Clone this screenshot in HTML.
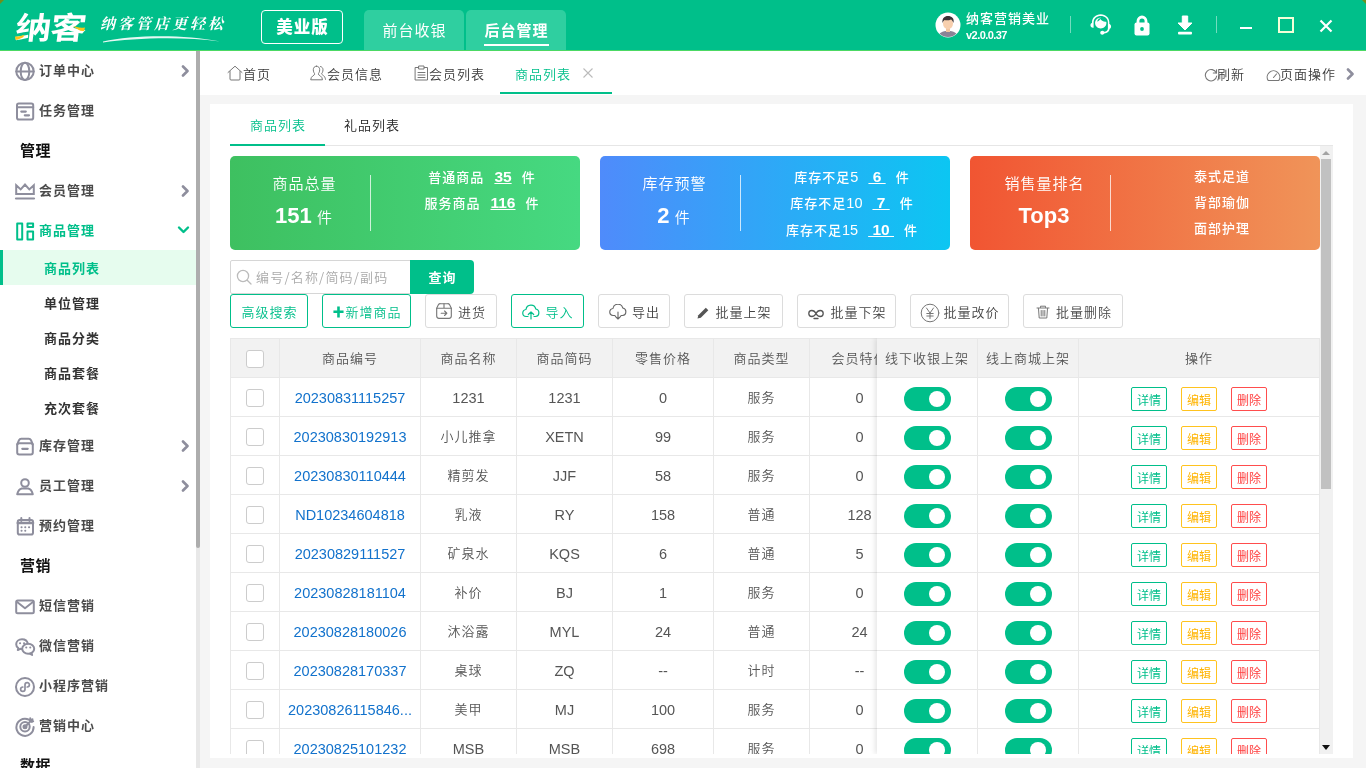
<!DOCTYPE html>
<html lang="zh-CN">
<head>
<meta charset="utf-8">
<title>商品列表</title>
<style>
*{box-sizing:border-box;margin:0;padding:0}
html,body{width:1366px;height:768px;overflow:hidden;background:#f5f5f5}
body{font-family:"Liberation Sans","Noto Sans CJK SC",sans-serif;font-size:13px;letter-spacing:1px;font-weight:350;color:#333;position:relative}
#wrap{position:absolute;left:0;top:0;width:1366px;height:768px;will-change:transform}
.abs{position:absolute}
svg{display:block}
/* header */
#hd{position:absolute;left:0;top:0;width:1366px;height:51px;background:#00bf8a;border-bottom:1px solid #4cd964}
#logo{position:absolute;left:16px;top:3px;font-size:36px;line-height:44px;font-weight:700;color:#fff;letter-spacing:-1px;font-family:"Noto Sans CJK SC",sans-serif;transform:skewX(-7deg) scaleY(.855);transform-origin:0 50%}
#slogan{position:absolute;left:100px;top:12px;font-size:15px;line-height:22px;letter-spacing:3px;font-weight:700;color:#fff;font-family:"Noto Serif CJK SC",serif;font-style:italic;white-space:nowrap}
#ver{position:absolute;left:261px;top:10px;width:82px;height:34px;border:1px solid #fff;border-radius:4px;color:#fff;font-weight:900;font-size:16.500px;line-height:31px;text-align:center;padding-left:1px;font-family:"Noto Sans CJK SC",sans-serif}
.htab{position:absolute;top:10px;height:40px;width:100px;background:#2fcfa0;border-radius:5px 5px 0 0;color:#fff;font-size:15px;font-weight:400;line-height:42px;text-align:center;padding-left:1px}
.htab u{text-decoration:none;border-bottom:2px solid #fff;padding-bottom:5px;font-weight:bold}
#un{position:absolute;left:966px;top:9px;color:#fff;font-size:13px;line-height:20px;font-weight:500;white-space:nowrap}
#uv{position:absolute;left:966px;top:28px;color:#fff;font-size:11px;line-height:14px;white-space:nowrap;letter-spacing:-.55px;font-weight:bold}
.hsep{position:absolute;top:16px;width:1px;height:17px;background:rgba(255,255,255,.45)}
/* sidebar */
#sb{position:absolute;left:0;top:51px;width:196px;height:717px;background:#fff;overflow:hidden}
#sbtrk{position:absolute;left:196px;top:51px;width:4px;height:717px;background:#e8e8e8}
#sbbar{position:absolute;left:196px;top:51px;width:4px;height:497px;background:#adadad;border-radius:0 0 2px 2px}
.mi{position:absolute;left:0;width:196px;height:40px;line-height:40px;font-weight:bold;color:#4a4a4a;font-size:13px}
.mi span{position:absolute;left:39px;top:1px}
.mi svg.ic{position:absolute;left:14px;top:10px}
.mi svg.ch{position:absolute;left:180px;top:14px}
.mh{position:absolute;left:20px;font-size:15px;letter-spacing:.5px;font-weight:bold;color:#111;line-height:42px}
.si{position:absolute;left:0;width:196px;height:35px;line-height:37px;font-weight:bold;color:#333;font-size:13px;padding-left:44px}
.si.on{background:#e6fcee;color:#00bf8a;border-left:3px solid #00bf8a;padding-left:41px}
/* tabbar */
#tb{position:absolute;left:200px;top:51px;width:1166px;height:44px;background:#fff}
.tt{position:absolute;top:0;height:44px;line-height:47px;font-size:13px;color:#3a3a3a;white-space:nowrap}
/* panel */
#pn{position:absolute;left:210px;top:104px;width:1143px;height:654px;background:#fff}
.itab{position:absolute;top:0;height:42px;line-height:44px;font-size:13px;color:#222}
.card{position:absolute;top:52px;width:350px;height:94px;border-radius:5px;color:#fff}
.card .t{position:absolute;left:0;width:148px;text-align:center;top:16px;font-size:15px;padding-left:1px;line-height:24px}
.card .n{position:absolute;left:0;width:148px;text-align:center;top:46px;font-size:15px;line-height:28px}
.card .n b{font-size:22px;letter-spacing:0}
.card .dv{position:absolute;left:140px;top:19px;width:1px;height:56px;background:rgba(255,255,255,.75)}
.card .r{position:absolute;left:152px;width:200px;text-align:center;font-size:13px;line-height:22px;white-space:nowrap;font-weight:500}
.card .r i{font-style:normal;font-size:14.500px;letter-spacing:0}
.card .r b{font-size:15.500px;letter-spacing:0;text-decoration:underline;white-space:pre;margin:0 10px 0 10px}
.btn{position:absolute;top:190px;height:34px;border:1px solid #dcdcdc;border-radius:3px;font-size:13px;line-height:36px;padding-left:1px;color:#444;white-space:nowrap;text-align:center;background:#fff}
.btn.g{border-color:#00bf8a;color:#00bf8a}
.btn svg{display:inline-block;vertical-align:-3px;margin-right:5px}
/* table */
#tbl{position:absolute;left:20px;top:234px;width:1090px;height:416px;overflow:hidden}
.tr{position:absolute;left:0;width:1090px;height:39px;border-bottom:1px solid #e8e8e8;background:#fff}
.tr.h{background:#f2f2f2;color:#555;height:40px;border-top:1px solid #e8e8e8}
.tr.h .td{height:38px}
.td{position:absolute;top:0;height:38px;line-height:40px;text-align:center;border-right:1px solid #e8e8e8;color:#555;font-size:13px;white-space:nowrap;overflow:hidden}
.td.l{font-size:14.500px;letter-spacing:0}
.td.id{color:#1272cc}
.cb{position:absolute;left:16px;top:11px;width:18px;height:18px;border:1px solid #ccc;border-radius:3px;background:#fff}
.sw{position:absolute;top:9px;width:47px;height:24px;border-radius:12px;background:#00bf8a}
.sw i{position:absolute;right:6px;top:4px;width:16px;height:16px;border-radius:8px;background:#fff}
.ob{position:absolute;top:9px;width:36px;height:24px;border:1px solid;border-radius:2px;font-size:12px;letter-spacing:0;font-weight:400;line-height:26px;text-align:center;background:#fff;overflow:hidden}
.ob.d{color:#00bf8a;border-color:#00bf8a}
.ob.e{color:#ffb400;border-color:#ffc31f}
.ob.x{color:#ff4040;border-color:#ff4d4d}
#fx{position:absolute;left:647px;top:0;width:443px;height:416px;box-shadow:-2px 0 5px rgba(0,0,0,.10);pointer-events:none}
</style>
</head>
<body><div id="wrap">
<div id="hd">
<div id="logo">纳客</div><svg class="abs" style="left:14px;top:24px" width="75" height="18" viewBox="0 0 75 18" fill="#fcc419"><path d="M1 12.500c3 .5 6-.8 9.500-1.800l-1.300 2.500C6 14.500 3.500 16 1.500 15.800z"/><path d="M59 2c3 .5 6 2.500 12 1.500l-1 3.500c-4 .5-7-2-11-5z"/></svg>
<div id="slogan">纳客管店更轻松</div><svg class="abs" style="left:103px;top:34px" width="120" height="10" viewBox="0 0 120 10" fill="#fff" opacity=".9"><path d="M0 7.500C30 1 80 0 117 7.500 80 2.200 30 4 0 8.500z"/></svg>
<div id="ver">美业版</div>
<div class="htab" style="left:364px">前台收银</div>
<div class="htab" style="left:466px"><u>后台管理</u></div>
<svg class="abs" style="left:935px;top:12px" width="26" height="26" viewBox="0 0 26 26"><defs><clipPath id="avc"><circle cx="13" cy="13" r="12"/></clipPath></defs><circle cx="13" cy="13" r="12.500" fill="#fff"/><g clip-path="url(#avc)"><path d="M3 26c0-5 4-7 10-7s10 2 10 7z" fill="#8a8396"/><rect x="11" y="15" width="4" height="5" fill="#f2c5a0"/><ellipse cx="13" cy="11.500" rx="5" ry="5.800" fill="#f7cfae"/><path d="M7.500 11c-.5-5 2-7 5.500-7s6.500 2 5.500 7c-.8-2-1.500-3-2.500-3.500-2 1-5 1-6.500.5-1 .8-1.500 1.800-2 3z" fill="#3a3336"/></g></svg>
<div id="un">纳客营销美业</div>
<div id="uv">v2.0.0.37</div>
<div class="hsep" style="left:1070px"></div>
<svg class="abs" style="left:1090px;top:13px" width="21.500" height="22.500" viewBox="0 0 25 26" fill="#fff" stroke="none"><path d="M12.500 1.500C6.500 1.500 2.300 5.800 2.300 11v.6C1.200 12 .5 13 .5 14.200c0 1.600 1.300 2.900 2.900 2.900h.8V10.800c0-4.200 3.500-7.300 8.300-7.300s8.300 3.100 8.300 7.300v7c0 2.200-1.700 3.600-4.300 3.900-.4-.7-1.200-1.200-2.100-1.200-1.400 0-2.500 1-2.500 2.300s1.100 2.300 2.500 2.300c1 0 1.800-.5 2.200-1.300 3.600-.4 6.100-2.400 6.300-5.600 1-.5 1.600-1.500 1.600-2.700 0-1.300-.8-2.400-2-2.800V11c0-5.200-4.200-9.500-10-9.500z"/><path d="M12.500 5.500c-3.800 0-6.600 2.600-6.600 6.100 0 3.600 2.800 6.300 6.600 6.300s6.600-2.700 6.600-6.300c0-.6-.1-1.100-.2-1.600-1.500.3-3.200-.1-4.700-1-.9-.6-1.600-1.400-2-2.200-.8 1.300-2.200 2.500-3.900 3 .5-2.400 2.300-4 4.700-4.200z" /></svg><svg class="abs" style="left:1132px;top:13px" width="20" height="24" viewBox="0 0 20 24" fill="none"><path d="M6 10V8a4 4 0 0 1 8 0v2" stroke="#fff" stroke-width="2.800"/><rect x="2.500" y="9.500" width="15" height="13" rx="2" fill="#fff"/><circle cx="10" cy="16" r="1.900" fill="#00bf8a"/></svg><svg class="abs" style="left:1175px;top:14px" width="20" height="22" viewBox="0 0 20 22" fill="#fff"><path d="M7.300 2h5.400v7h4.300L10 16 3 9h4.300z" stroke="#fff" stroke-width="1" stroke-linejoin="round"/><rect x="3" y="17.800" width="14" height="2.600" rx="1"/></svg>
<div class="hsep" style="left:1216px"></div>
<div class="abs" style="left:1240px;top:27px;width:12px;height:2px;background:#fff"></div><div class="abs" style="left:1278px;top:17px;width:16px;height:16px;border:2px solid #f4ffd8"></div><svg class="abs" style="left:1319px;top:19px" width="14" height="14" viewBox="0 0 14 14" stroke="#fff" stroke-width="2.200" stroke-linecap="butt"><path d="M1.500 1.500l11 11M12.500 1.500l-11 11"/></svg>
<div class="abs" style="left:0;top:0;width:0;height:0;border-top:4px solid #6f8f1c;border-right:4px solid transparent"></div><div class="abs" style="left:1362px;top:0;width:0;height:0;border-top:4px solid #6f8f1c;border-left:4px solid transparent"></div>
</div>
<div id="sb">
<div class="mi" style="top:-1px"><svg class="ic" width="22" height="22" viewBox="0 0 22 22" fill="none" stroke="#8e8e9d" stroke-width="2" stroke-linecap="round" stroke-linejoin="round"><circle cx="11" cy="11.400" r="8.700"/><ellipse cx="11" cy="11.400" rx="4.300" ry="8.700"/><path d="M2.300 11.400h17.400"/></svg><span>订单中心</span><svg class="ch" style="top:15px" width="10" height="12" viewBox="0 0 10 12" fill="none" stroke="#8e8e9d" stroke-width="2.6" stroke-linecap="round" stroke-linejoin="round"><path d="M3 1.500l4.500 4.500L3 10.500"/></svg></div>
<div class="mi" style="top:39px"><svg class="ic" width="22" height="22" viewBox="0 0 22 22" fill="none" stroke="#8e8e9d" stroke-width="2" stroke-linecap="round" stroke-linejoin="round"><rect x="3" y="3.400" width="16.200" height="16.200" rx="1.800"/><path d="M3 7.300h16.200"/><path d="M7.300 11.600h4.500M10.800 15.300h4.200" stroke-width="2.200"/></svg><span>任务管理</span></div>
<div class="mh" style="top:79px">管理</div>
<div class="mi" style="top:119px"><svg class="ic" width="22" height="22" viewBox="0 0 22 22" fill="none" stroke="#8e8e9d" stroke-width="2" stroke-linecap="round" stroke-linejoin="round"><path d="M2.200 5.200l4.500 4.200L11 4.600l4.300 4.800 4.500-4.200V14H2.200z" stroke-linejoin="miter"/><path d="M2 18.500h18" stroke-width="2.200"/></svg><span>会员管理</span><svg class="ch" style="top:15px" width="10" height="12" viewBox="0 0 10 12" fill="none" stroke="#8e8e9d" stroke-width="2.6" stroke-linecap="round" stroke-linejoin="round"><path d="M3 1.500l4.500 4.500L3 10.500"/></svg></div>
<div class="mi" style="top:159px;color:#00bf8a"><svg class="ic" width="22" height="22" viewBox="0 0 22 22" fill="none" stroke="#00bf8a" stroke-width="2" stroke-linecap="round" stroke-linejoin="round"><rect x="3.200" y="3.400" width="5" height="16.200"/><rect x="13.500" y="3.400" width="5.600" height="3.600"/><rect x="13.500" y="11.400" width="5.600" height="8.200"/></svg><span>商品管理</span><svg class="ch" style="left:177px;top:15px" width="13" height="10" viewBox="0 0 13 10" fill="none" stroke="#00bf8a" stroke-width="2.4" stroke-linecap="round" stroke-linejoin="round"><path d="M2 2.500l4.500 4.500L11 2.500"/></svg></div>
<div class="si on" style="top:199px">商品列表</div>
<div class="si" style="top:234px">单位管理</div>
<div class="si" style="top:269px">商品分类</div>
<div class="si" style="top:304px">商品套餐</div>
<div class="si" style="top:339px">充次套餐</div>
<div class="mi" style="top:374px"><svg class="ic" width="22" height="22" viewBox="0 0 22 22" fill="none" stroke="#8e8e9d" stroke-width="2" stroke-linecap="round" stroke-linejoin="round"><path d="M3.200 9.500l1.800-4.300A2.500 2.500 0 0 1 7.300 3.800h7.400a2.500 2.500 0 0 1 2.300 1.400l1.800 4.300"/><rect x="3.200" y="8.200" width="15.600" height="11.400" rx="2"/><path d="M8.300 13.800h5.400" stroke-width="2.200"/></svg><span>库存管理</span><svg class="ch" style="top:15px" width="10" height="12" viewBox="0 0 10 12" fill="none" stroke="#8e8e9d" stroke-width="2.6" stroke-linecap="round" stroke-linejoin="round"><path d="M3 1.500l4.500 4.500L3 10.500"/></svg></div>
<div class="mi" style="top:414px"><svg class="ic" width="22" height="22" viewBox="0 0 22 22" fill="none" stroke="#8e8e9d" stroke-width="2" stroke-linecap="round" stroke-linejoin="round"><circle cx="11" cy="8" r="3.800"/><path d="M3.200 19.300c.8-3.300 2.400-5.300 4.600-5.800h6.400c2.200.5 3.800 2.500 4.600 5.800z"/></svg><span>员工管理</span><svg class="ch" style="top:15px" width="10" height="12" viewBox="0 0 10 12" fill="none" stroke="#8e8e9d" stroke-width="2.6" stroke-linecap="round" stroke-linejoin="round"><path d="M3 1.500l4.500 4.500L3 10.500"/></svg></div>
<div class="mi" style="top:454px"><svg class="ic" width="22" height="22" viewBox="0 0 22 22" fill="none" stroke="#8e8e9d" stroke-width="2" stroke-linecap="round" stroke-linejoin="round"><rect x="3.800" y="5" width="15.200" height="14.500" rx="1.800"/><path d="M3.800 8h15.200" stroke-width="2.600"/><path d="M7.300 3v3M15.500 3v3"/><path d="M7.500 12.200h.1M11.200 12.200h.1M15 12.200h.1M7.500 15.800h.1M11.200 15.800h.1" stroke-width="2"/></svg><span>预约管理</span></div>
<div class="mh" style="top:494px">营销</div>
<div class="mi" style="top:534px"><svg class="ic" width="22" height="22" viewBox="0 0 22 22" fill="none" stroke="#8e8e9d" stroke-width="2" stroke-linecap="round" stroke-linejoin="round"><rect x="2.200" y="5.600" width="17.600" height="12.600" rx="1.500"/><path d="M2.800 6.800l8.200 6.400 8.200-6.400"/></svg><span>短信营销</span></div>
<div class="mi" style="top:574px"><svg class="ic" width="22" height="22" viewBox="0 0 22 22" fill="none" stroke="#8e8e9d" stroke-width="2" stroke-linecap="round" stroke-linejoin="round"><path d="M13.800 8.600C13.300 6 11 4.200 8 4.200c-3.300 0-5.800 2.200-5.800 5 0 1.600.8 3 2.100 3.900L3.800 15l2.500-1.200c.5.100 1 .2 1.600.2"/><ellipse cx="14.200" cy="13.700" rx="6" ry="5"/><path d="M17.500 18l.6 2-2.300-1.300"/><path d="M6 8.200h.1M10 8.200h.1M12.200 12.500h.1M16.200 12.500h.1" stroke-width="2"/></svg><span>微信营销</span></div>
<div class="mi" style="top:614px"><svg class="ic" width="22" height="22" viewBox="0 0 22 22" fill="none" stroke="#8e8e9d" stroke-width="2" stroke-linecap="round" stroke-linejoin="round"><circle cx="11" cy="12" r="9"/><path d="M11 14.200V9.800a2.200 2.200 0 1 1 2.200 2.200M11 9.800v4.400a2.200 2.200 0 1 1-2.200-2.200" stroke-width="1.700"/></svg><span>小程序营销</span></div>
<div class="mi" style="top:654px"><svg class="ic" width="22" height="22" viewBox="0 0 22 22" fill="none" stroke="#8e8e9d" stroke-width="2" stroke-linecap="round" stroke-linejoin="round"><path d="M17.800 7A8.600 8.600 0 1 0 19.600 12"/><circle cx="11" cy="11.800" r="4.700"/><circle cx="11" cy="11.800" r="1.500" fill="#8e8e9d"/><path d="M11 11.800l7.500-7.500M16.200 3.300l.5 2.500 2.500.5"/></svg><span>营销中心</span></div>
<div class="mh" style="top:694px">数据</div>
</div>
<div id="sbtrk"></div><div id="sbbar"></div>
<div id="tb">
<div class="abs" style="left:27px;top:14px"><svg width="16" height="16" viewBox="0 0 16 16" fill="none" stroke="#777" stroke-width="1" stroke-linecap="round" stroke-linejoin="round"><path d="M1 7.500L8 1.200l7 6.300M3 6.500V14a1 1 0 0 0 1 1h8a1 1 0 0 0 1-1V6.500"/></svg></div><div class="tt" style="left:43px">首页</div>
<div class="abs" style="left:110px;top:14px"><svg width="17" height="16" viewBox="0 0 17 16" fill="none" stroke="#777" stroke-width="1" stroke-linecap="round" stroke-linejoin="round"><path d="M6.500 1.200c2 0 3.200 1.500 3.200 3.500S8.700 8.500 8 9c0 1 4.500 2 4.500 5.800H.7C.7 11 5 10 5 9c-.7-.5-1.700-2.300-1.700-4.300s1.200-3.500 3.200-3.500z"/><path d="M10.500 1.500c1.500.3 2.500 1.600 2.500 3.300 0 2-1 3.500-1.500 4 .2 1 3.700 1.800 4 5.500"/></svg></div><div class="tt" style="left:127px">会员信息</div>
<div class="abs" style="left:214px;top:14px"><svg width="15" height="16" viewBox="0 0 15 16" fill="none" stroke="#777" stroke-width="1" stroke-linecap="round" stroke-linejoin="round"><rect x="1.500" y="2.500" width="12" height="12.500"/><rect x="5" y="1" width="5" height="3" fill="#fff"/><path d="M4 7.500h7M4 10h7M4 12.500h7"/></svg></div><div class="tt" style="left:229px">会员列表</div>
<div class="tt" style="left:315px;color:#00bf8a">商品列表</div>
<div class="abs" style="left:383px;top:17px"><svg width="10" height="10" viewBox="0 0 10 10" stroke="#bbb" stroke-width="1.100"><path d="M.5.500l9 9M9.500.500l-9 9"/></svg></div>
<div class="abs" style="left:300px;top:41px;width:112px;height:2px;background:#00bf8a"></div>
<div class="abs" style="left:1004px;top:17px"><svg width="14" height="14" viewBox="0 0 14 14" fill="none" stroke="#777" stroke-width="1.1" stroke-linecap="round" stroke-linejoin="round"><path d="M12.300 5A5.700 5.700 0 1 0 12.700 8"/><path d="M12.500 1.800V5H9.300"/></svg></div><div class="tt" style="left:1017px">刷新</div>
<div class="abs" style="left:1066px;top:17px"><svg width="15" height="14" viewBox="0 0 15 14" fill="none" stroke="#777" stroke-width="1.1" stroke-linecap="round" stroke-linejoin="round"><path d="M2.200 12.500A6.300 6.300 0 1 1 12.800 12.500z"/><path d="M7.500 9.500l3-3.500"/></svg></div><div class="tt" style="left:1080px">页面操作</div>
<div class="abs" style="left:1145px;top:17px"><svg width="10" height="12" viewBox="0 0 10 12" fill="none" stroke="#8e8e9d" stroke-width="2.6" stroke-linecap="round" stroke-linejoin="round"><path d="M3 1.500l4.500 4.500L3 10.500"/></svg></div>
</div>
<div id="pn">
<div class="itab" style="left:40px;color:#00bf8a">商品列表</div>
<div class="itab" style="left:134px">礼品列表</div>
<div class="abs" style="left:20px;top:41px;width:1103px;height:1px;background:#e6e6e6"></div>
<div class="abs" style="left:20px;top:40px;width:95px;height:2px;background:#00bf8a"></div>
<div class="card" style="left:20px;background:linear-gradient(90deg,#3ec060,#46d981)"><div class="t">商品总量</div><div class="n"><b>151</b> 件</div><div class="dv"></div><div class="r" style="top:10px">普通商品<b>35</b>件</div><div class="r" style="top:36px">服务商品<b>116</b>件</div></div><div class="card" style="left:390px;background:linear-gradient(90deg,#4f8bfb,#0cc6f2)"><div class="t">库存预警</div><div class="n"><b>2</b> 件</div><div class="dv"></div><div class="r" style="top:10px">库存不足<i>5</i><b> 6 </b>件</div><div class="r" style="top:36px">库存不足<i>10</i><b> 7 </b>件</div><div class="r" style="top:63px">库存不足<i>15</i><b> 10 </b>件</div></div><div class="card" style="left:760px;background:linear-gradient(90deg,#f15532,#f09459)"><div class="t">销售量排名</div><div class="n"><b>Top3</b></div><div class="dv"></div><div class="r" style="top:10px">泰式足道</div><div class="r" style="top:36px">背部瑜伽</div><div class="r" style="top:62px">面部护理</div></div>
<div class="abs" style="left:20px;top:156px;width:181px;height:34px;border:1px solid #d6d6d6;border-radius:2px 0 0 2px;background:#fff"><div class="abs" style="left:5px;top:8px"><svg width="16" height="16" viewBox="0 0 16 16" fill="none" stroke="#bbb" stroke-width="1.3" stroke-linecap="round" stroke-linejoin="round"><circle cx="7" cy="7" r="5.600"/><path d="M11.200 11.200l3.800 3.800"/></svg></div><div class="abs" style="left:25px;top:0;line-height:32px;color:#aaa;font-size:13px;letter-spacing:1.200px;white-space:nowrap;font-family:'Noto Sans CJK SC',sans-serif">编号/名称/简码/副码</div></div>
<div class="abs" style="left:200px;top:156px;width:64px;height:34px;background:#00bf8a;border-radius:0 4px 4px 0;color:#fff;font-weight:bold;font-size:13px;padding-left:1px;line-height:36px;text-align:center">查询</div>
<div class="btn g" style="left:20px;width:78px">高级搜索</div><div class="btn g" style="left:112px;width:89px"><b style="font-size:12px">✚</b>新增商品</div><div class="btn " style="left:215px;width:72px"><svg style="margin-left:-2px" width="18" height="18" viewBox="0 0 16 16" fill="none" stroke="#777" stroke-width="1" stroke-linecap="round" stroke-linejoin="round"><path d="M1.500 5.500L3 2.500a2 2 0 0 1 1.800-1h6.400a2 2 0 0 1 1.800 1l1.500 3v7a2 2 0 0 1-2 2h-9a2 2 0 0 1-2-2z"/><path d="M1.500 5.500h13M8 1.500v4"/><path d="M5.500 10h4.500M8.500 8l2 2-2 2"/></svg>进货</div><div class="btn g" style="left:301px;width:73px"><svg width="18" height="16" viewBox="0 0 18 16" fill="none" stroke="#00bf8a" stroke-width="1.2" stroke-linecap="round" stroke-linejoin="round"><path d="M6 12.500H4.500a3.500 3.500 0 0 1-.5-7A5 5 0 0 1 13.800 5a3.800 3.800 0 0 1-.3 7.500H12"/><path d="M9 15V8M6.300 10.500L9 7.800l2.700 2.700"/></svg>导入</div><div class="btn " style="left:388px;width:72px"><svg width="18" height="16" viewBox="0 0 18 16" fill="none" stroke="#666" stroke-width="1.1" stroke-linecap="round" stroke-linejoin="round"><path d="M6 11.500H4.500a3.500 3.500 0 0 1-.5-7A5 5 0 0 1 13.800 4a3.800 3.800 0 0 1-.3 7.500H12"/><path d="M9 8v7M6.300 12.300L9 15l2.700-2.700"/></svg>导出</div><div class="btn " style="left:474px;width:99px"><svg width="14" height="14" viewBox="0 0 14 14" fill="#555"><path d="M1.500 12.500l.8-3.300 7.500-7.500 2.500 2.500-7.500 7.500z"/></svg>批量上架</div><div class="btn " style="left:587px;width:99px"><svg width="18" height="12" viewBox="0 0 18 12" fill="none" stroke="#555" stroke-width="1.3" stroke-linecap="round" stroke-linejoin="round"><path d="M9 5.500C8 3.500 6.500 2.500 4.800 2.500a3 3 0 0 0 0 6c1.700 0 3.200-1 4.200-3s2.500-3 4.200-3a3 3 0 0 1 0 6c-1.700 0-3.200-1-4.200-3"/><path d="M7 10.500h4"/></svg>批量下架</div><div class="btn " style="left:700px;width:99px"><svg style="vertical-align:-5.500px;margin-right:3px" width="20" height="20" viewBox="0 0 20 20" fill="none" stroke="#777" stroke-width="1" stroke-linecap="round" stroke-linejoin="round"><circle cx="10" cy="10" r="8.800"/><path d="M6.500 5l3.500 5 3.500-5M10 10v5.500M6.800 10.500h6.400M6.800 13h6.400"/></svg>批量改价</div><div class="btn " style="left:813px;width:100px"><svg width="16" height="16" viewBox="0 0 16 16" fill="none" stroke="#777" stroke-width="1" stroke-linecap="round" stroke-linejoin="round"><path d="M2 4h12M5.500 3.500V2.200h5v1.300M3.500 4.500l.7 9.500h7.600l.7-9.500M6.200 6.500v5.500M8 6.500v5.500M9.800 6.500v5.500"/></svg>批量删除</div>
<div id="tbl"><div class="tr h" style="top:0"><div class="td" style="left:0;width:50px"><div class="cb"></div></div><div class="td" style="left:50px;width:141px">商品编号</div><div class="td" style="left:191px;width:96px">商品名称</div><div class="td" style="left:287px;width:96px">商品简码</div><div class="td" style="left:383px;width:101px">零售价格</div><div class="td" style="left:484px;width:96px">商品类型</div><div class="td" style="left:580px;width:100px">会员特价</div><div class="td" style="left:647px;width:101px;background:#f2f2f2">线下收银上架</div><div class="td" style="left:748px;width:101px;background:#f2f2f2">线上商城上架</div><div class="td" style="left:849px;width:241px;background:#f2f2f2">操作</div></div><div class="tr" style="top:40px"><div class="td" style="left:0;width:50px"><div class="cb"></div></div><div class="td id l" style="left:50px;width:141px">20230831115257</div><div class="td l" style="left:191px;width:96px">1231</div><div class="td l" style="left:287px;width:96px">1231</div><div class="td l" style="left:383px;width:101px">0</div><div class="td" style="left:484px;width:96px">服务</div><div class="td l" style="left:580px;width:100px">0</div><div class="td" style="left:647px;width:101px;background:#fff"><div class="sw" style="left:27px"><i></i></div></div><div class="td" style="left:748px;width:101px;background:#fff"><div class="sw" style="left:27px"><i></i></div></div><div class="td" style="left:849px;width:241px;background:#fff"><div class="ob d" style="left:52px">详情</div><div class="ob e" style="left:102px">编辑</div><div class="ob x" style="left:152px">删除</div></div></div><div class="tr" style="top:79px"><div class="td" style="left:0;width:50px"><div class="cb"></div></div><div class="td id l" style="left:50px;width:141px">20230830192913</div><div class="td" style="left:191px;width:96px">小儿推拿</div><div class="td l" style="left:287px;width:96px">XETN</div><div class="td l" style="left:383px;width:101px">99</div><div class="td" style="left:484px;width:96px">服务</div><div class="td l" style="left:580px;width:100px">0</div><div class="td" style="left:647px;width:101px;background:#fff"><div class="sw" style="left:27px"><i></i></div></div><div class="td" style="left:748px;width:101px;background:#fff"><div class="sw" style="left:27px"><i></i></div></div><div class="td" style="left:849px;width:241px;background:#fff"><div class="ob d" style="left:52px">详情</div><div class="ob e" style="left:102px">编辑</div><div class="ob x" style="left:152px">删除</div></div></div><div class="tr" style="top:118px"><div class="td" style="left:0;width:50px"><div class="cb"></div></div><div class="td id l" style="left:50px;width:141px">20230830110444</div><div class="td" style="left:191px;width:96px">精剪发</div><div class="td l" style="left:287px;width:96px">JJF</div><div class="td l" style="left:383px;width:101px">58</div><div class="td" style="left:484px;width:96px">服务</div><div class="td l" style="left:580px;width:100px">0</div><div class="td" style="left:647px;width:101px;background:#fff"><div class="sw" style="left:27px"><i></i></div></div><div class="td" style="left:748px;width:101px;background:#fff"><div class="sw" style="left:27px"><i></i></div></div><div class="td" style="left:849px;width:241px;background:#fff"><div class="ob d" style="left:52px">详情</div><div class="ob e" style="left:102px">编辑</div><div class="ob x" style="left:152px">删除</div></div></div><div class="tr" style="top:157px"><div class="td" style="left:0;width:50px"><div class="cb"></div></div><div class="td id l" style="left:50px;width:141px">ND10234604818</div><div class="td" style="left:191px;width:96px">乳液</div><div class="td l" style="left:287px;width:96px">RY</div><div class="td l" style="left:383px;width:101px">158</div><div class="td" style="left:484px;width:96px">普通</div><div class="td l" style="left:580px;width:100px">128</div><div class="td" style="left:647px;width:101px;background:#fff"><div class="sw" style="left:27px"><i></i></div></div><div class="td" style="left:748px;width:101px;background:#fff"><div class="sw" style="left:27px"><i></i></div></div><div class="td" style="left:849px;width:241px;background:#fff"><div class="ob d" style="left:52px">详情</div><div class="ob e" style="left:102px">编辑</div><div class="ob x" style="left:152px">删除</div></div></div><div class="tr" style="top:196px"><div class="td" style="left:0;width:50px"><div class="cb"></div></div><div class="td id l" style="left:50px;width:141px">20230829111527</div><div class="td" style="left:191px;width:96px">矿泉水</div><div class="td l" style="left:287px;width:96px">KQS</div><div class="td l" style="left:383px;width:101px">6</div><div class="td" style="left:484px;width:96px">普通</div><div class="td l" style="left:580px;width:100px">5</div><div class="td" style="left:647px;width:101px;background:#fff"><div class="sw" style="left:27px"><i></i></div></div><div class="td" style="left:748px;width:101px;background:#fff"><div class="sw" style="left:27px"><i></i></div></div><div class="td" style="left:849px;width:241px;background:#fff"><div class="ob d" style="left:52px">详情</div><div class="ob e" style="left:102px">编辑</div><div class="ob x" style="left:152px">删除</div></div></div><div class="tr" style="top:235px"><div class="td" style="left:0;width:50px"><div class="cb"></div></div><div class="td id l" style="left:50px;width:141px">20230828181104</div><div class="td" style="left:191px;width:96px">补价</div><div class="td l" style="left:287px;width:96px">BJ</div><div class="td l" style="left:383px;width:101px">1</div><div class="td" style="left:484px;width:96px">服务</div><div class="td l" style="left:580px;width:100px">0</div><div class="td" style="left:647px;width:101px;background:#fff"><div class="sw" style="left:27px"><i></i></div></div><div class="td" style="left:748px;width:101px;background:#fff"><div class="sw" style="left:27px"><i></i></div></div><div class="td" style="left:849px;width:241px;background:#fff"><div class="ob d" style="left:52px">详情</div><div class="ob e" style="left:102px">编辑</div><div class="ob x" style="left:152px">删除</div></div></div><div class="tr" style="top:274px"><div class="td" style="left:0;width:50px"><div class="cb"></div></div><div class="td id l" style="left:50px;width:141px">20230828180026</div><div class="td" style="left:191px;width:96px">沐浴露</div><div class="td l" style="left:287px;width:96px">MYL</div><div class="td l" style="left:383px;width:101px">24</div><div class="td" style="left:484px;width:96px">普通</div><div class="td l" style="left:580px;width:100px">24</div><div class="td" style="left:647px;width:101px;background:#fff"><div class="sw" style="left:27px"><i></i></div></div><div class="td" style="left:748px;width:101px;background:#fff"><div class="sw" style="left:27px"><i></i></div></div><div class="td" style="left:849px;width:241px;background:#fff"><div class="ob d" style="left:52px">详情</div><div class="ob e" style="left:102px">编辑</div><div class="ob x" style="left:152px">删除</div></div></div><div class="tr" style="top:313px"><div class="td" style="left:0;width:50px"><div class="cb"></div></div><div class="td id l" style="left:50px;width:141px">20230828170337</div><div class="td" style="left:191px;width:96px">桌球</div><div class="td l" style="left:287px;width:96px">ZQ</div><div class="td l" style="left:383px;width:101px">--</div><div class="td" style="left:484px;width:96px">计时</div><div class="td l" style="left:580px;width:100px">--</div><div class="td" style="left:647px;width:101px;background:#fff"><div class="sw" style="left:27px"><i></i></div></div><div class="td" style="left:748px;width:101px;background:#fff"><div class="sw" style="left:27px"><i></i></div></div><div class="td" style="left:849px;width:241px;background:#fff"><div class="ob d" style="left:52px">详情</div><div class="ob e" style="left:102px">编辑</div><div class="ob x" style="left:152px">删除</div></div></div><div class="tr" style="top:352px"><div class="td" style="left:0;width:50px"><div class="cb"></div></div><div class="td id l" style="left:50px;width:141px">20230826115846...</div><div class="td" style="left:191px;width:96px">美甲</div><div class="td l" style="left:287px;width:96px">MJ</div><div class="td l" style="left:383px;width:101px">100</div><div class="td" style="left:484px;width:96px">服务</div><div class="td l" style="left:580px;width:100px">0</div><div class="td" style="left:647px;width:101px;background:#fff"><div class="sw" style="left:27px"><i></i></div></div><div class="td" style="left:748px;width:101px;background:#fff"><div class="sw" style="left:27px"><i></i></div></div><div class="td" style="left:849px;width:241px;background:#fff"><div class="ob d" style="left:52px">详情</div><div class="ob e" style="left:102px">编辑</div><div class="ob x" style="left:152px">删除</div></div></div><div class="tr" style="top:391px"><div class="td" style="left:0;width:50px"><div class="cb"></div></div><div class="td id l" style="left:50px;width:141px">20230825101232</div><div class="td l" style="left:191px;width:96px">MSB</div><div class="td l" style="left:287px;width:96px">MSB</div><div class="td l" style="left:383px;width:101px">698</div><div class="td" style="left:484px;width:96px">服务</div><div class="td l" style="left:580px;width:100px">0</div><div class="td" style="left:647px;width:101px;background:#fff"><div class="sw" style="left:27px"><i></i></div></div><div class="td" style="left:748px;width:101px;background:#fff"><div class="sw" style="left:27px"><i></i></div></div><div class="td" style="left:849px;width:241px;background:#fff"><div class="ob d" style="left:52px">详情</div><div class="ob e" style="left:102px">编辑</div><div class="ob x" style="left:152px">删除</div></div></div><div id="fx" style="left:647px"></div><div class="abs" style="left:0;top:0;width:1px;height:416px;background:#e8e8e8"></div></div>
<div class="abs" style="left:1110px;top:42px;width:13px;height:608px;background:#f1f1f1"></div>
<div class="abs" style="left:1111px;top:55px;width:10px;height:330px;background:#c1c1c1"></div>
<div class="abs" style="left:1112px;top:47px;width:0;height:0;border:4px solid transparent;border-top:0;border-bottom:4px solid #a3a3a3"></div>
<div class="abs" style="left:1112px;top:641px;width:0;height:0;border:4px solid transparent;border-bottom:0;border-top:5px solid #111"></div>
</div>
</div></body>
</html>
